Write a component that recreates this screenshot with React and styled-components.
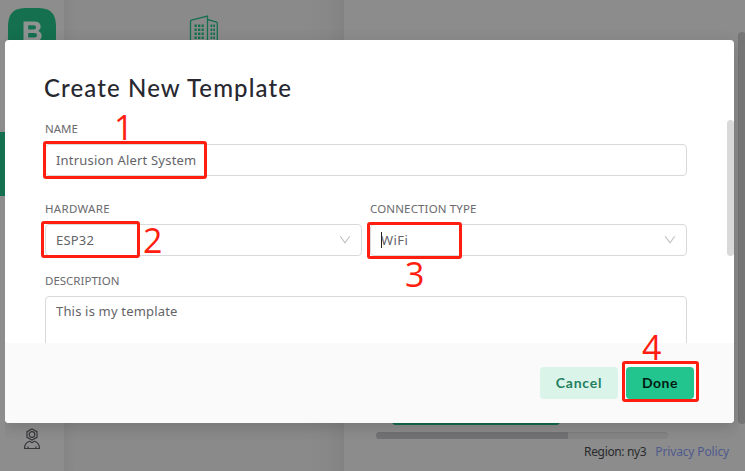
import React from "react";
import styled, { createGlobalStyle } from "styled-components";

const GlobalStyle = createGlobalStyle`
  * { box-sizing: border-box; }
  body {
    margin: 0;
    overflow: hidden;
    font-family: "Noto Sans", "Open Sans", sans-serif;
    background: #8c8c8c;
  }
`;

const Screen = styled.div`
  position: relative;
  width: 745px;
  height: 471px;
  overflow: hidden;
`;

const Page = styled.div`
  display: flex;
  height: 100%;
  background: #8c8c8c;
`;

const Rail = styled.nav`
  display: flex;
  flex-direction: column;
  align-items: center;
  width: 64px;
  padding-top: 8px;
  background: #8d8d8d;
`;

const Logo = styled.svg`
  display: block;
  width: 48px;
  height: 48px;
`;

const ActiveItem = styled.div`
  width: 64px;
  height: 64px;
  margin-top: 76px;
  background: #14704f;
`;

const ProfileIcon = styled.svg`
  width: 18px;
  height: 22px;
  margin-top: 232px;
`;

const Side = styled.aside`
  width: 280px;
  display: flex;
  justify-content: center;
  align-items: flex-start;
  padding-top: 15px;
  background: linear-gradient(90deg, #858585, #8a8a8a 4%, #8a8a8a 85%, #888888 94%, #828282);
`;

const Main = styled.main`
  flex: 1;
  display: flex;
  flex-direction: column;
  justify-content: flex-end;
`;

const PrimaryStrip = styled.div`
  width: 168px;
  height: 32px;
  margin-left: 48px;
  border-radius: 4px;
  background: #126b4b;
`;

const Track = styled.div`
  width: 292px;
  height: 7px;
  margin: 7px 0 0 32px;
  border-radius: 4px;
  background: #858585;
  border-top: 1px solid #7e7e7e;
`;

const Thumb = styled.div`
  width: 192px;
  height: 7px;
  margin-top: -1px;
  border-radius: 4px 0 0 4px;
  background: #727274;
`;

const Footer = styled.footer`
  display: flex;
  justify-content: flex-end;
  gap: 9px;
  height: 32px;
  padding: 4px 16px 0 0;
  font-size: 12px;
  line-height: 18px;
  color: #292a2d;
`;

const FooterText = styled.span`
  letter-spacing: ${(p) => p.$spacing || 0}px;
`;

const Policy = styled(FooterText)`
  color: #4f5b8c;
`;

const PageScroll = styled.div`
  position: absolute;
  left: 738px;
  top: 32px;
  width: 8px;
  height: 392px;
  border-radius: 4px;
  background: #757575;
`;

const ModalWrap = styled.div`
  position: absolute;
  top: 0;
  left: 5px;
  width: 734px;
  height: 439px;
  padding: 40px 5px 16px 0;
  overflow: hidden;
`;

const Modal = styled.section`
  position: relative;
  display: flex;
  flex-direction: column;
  height: 383px;
  overflow: hidden;
  border-radius: 4px;
  background: #fff;
`;

const ModalShadow = styled.div`
  border-radius: 4px;
  box-shadow: 0 4px 16px rgba(0, 0, 0, 0.16);
`;

const Form = styled.div`
  height: 303px;
  padding: 32px 47px 0 40px;
  overflow: hidden;
`;

const Title = styled.h1`
  margin: 0 0 0 -1px;
  height: 32px;
  font: 500 24px/32px Lato, sans-serif;
  letter-spacing: 1.12px;
  color: #282830;
  white-space: nowrap;
`;

const Columns = styled.div`
  display: grid;
  grid-template-columns: 317px 317px;
  gap: 8px;
`;

const Field = styled.div`
  display: flex;
  flex-direction: column;
  padding-top: ${(p) => p.$top}px;
`;

const Label = styled.label`
  height: 16px;
  margin-bottom: 7px;
  font-size: 11.5px;
  line-height: 16px;
  letter-spacing: ${(p) => p.$spacing || 0}px;
  color: #6a6a6e;
  white-space: nowrap;
`;

const Control = styled.div`
  display: flex;
  justify-content: space-between;
  align-items: flex-start;
  height: ${(p) => p.$height || 32}px;
  padding: ${(p) => p.$pad || 4}px 10px ${(p) => p.$pad || 4}px 11px;
  border: 1px solid #d9d9d9;
  border-radius: 4px;
  font-size: 13px;
  line-height: 22px;
  color: #646468;
`;

const Value = styled.span`
  margin-left: -1px;
  letter-spacing: ${(p) => p.$spacing || 0}px;
`;

const Caret = styled.i`
  position: absolute;
  width: 1px;
  height: 16px;
  margin-top: 3px;
  background: #222;
`;

const Chevron = styled.svg`
  width: 12px;
  height: 10px;
  margin-top: 6px;
`;

const Actions = styled.div`
  display: flex;
  justify-content: flex-end;
  gap: 8px;
  height: 80px;
  padding: 24px 40px;
  background: #fafafa;
`;

const Button = styled.button`
  width: ${(p) => (p.$primary ? 68 : 78)}px;
  height: 32px;
  padding: 0;
  border: 0;
  border-radius: 4px;
  background: ${(p) => (p.$primary ? "#23c58e" : "#daf4ea")};
  color: ${(p) => (p.$primary ? "#041a12" : "#247f60")};
  font: 700 14px/32px Lato, sans-serif;
  letter-spacing: ${(p) => (p.$primary ? 0.5 : 0.75)}px;
`;

const FormScroll = styled.div`
  position: absolute;
  right: 0;
  top: 80px;
  width: 7px;
  height: 136px;
  border-radius: 4px;
  background: #d9d9d9;
`;

const Mark = styled.div`
  position: absolute;
  left: ${(p) => p.$x}px;
  top: ${(p) => p.$y}px;
  width: ${(p) => p.$w}px;
  height: ${(p) => p.$h}px;
  border: 3px solid #ff1e10;
  border-radius: 3px;
`;

const Step = styled.span`
  position: absolute;
  left: ${(p) => p.$x}px;
  top: ${(p) => p.$y}px;
  font: 400 34px/34px "Open Sans", sans-serif;
  color: #ff1e10;
`;

const Arrow = () => (
  <Chevron viewBox="0 0 12 10" fill="none" stroke="#bfbfbf" strokeWidth="1.1">
    <path d="M1.2 1.2 6 7.8 10.8 1.2" />
  </Chevron>
);

function Building() {
  return (
    <svg width="30" height="34" viewBox="0 0 30 34" fill="none" stroke="#14704f" strokeWidth="1.3">
      <path d="M1.5 33V6.5Q1.5 5.4 2.4 5.1L18.5 1V33M18.5 4.5 27.5 7Q28.3 7.3 28.3 8.2V33" />
      <path d="M5.5 10.8H15M5.5 14.8H15M5.5 18.8H15M5.5 22.8H15M5.5 26.8H15" strokeWidth="2.5" strokeDasharray="2.3 1.2" />
      <path d="M21.5 10.8H26M21.5 14.8H26M21.5 18.8H26M21.5 22.8H26M21.5 26.8H26" strokeWidth="2.5" strokeDasharray="1.8 1" />
    </svg>
  );
}

export default function App() {
  return (
    <Screen>
      <GlobalStyle />
      <Page>
        <Rail>
          <Logo viewBox="0 0 48 48">
            <path d="M0 20C0 5 5 0 20 0H28C43 0 48 5 48 20V28C48 43 43 48 28 48H20C5 48 0 43 0 28Z" fill="#14704f" />
            <path
              fillRule="evenodd"
              fill="#8f9391"
              d="M15.5 13.5H26Q32.7 13.5 32.7 18.8 32.7 21.8 30.2 23.1 33.7 24.4 33.7 28 33.7 33.2 26.5 33.2H15.5ZM20.2 17.2V21.5H25.3Q28 21.5 28 19.3 28 17.2 25.3 17.2ZM20.2 25.1V29.5H26Q29 29.5 29 27.3 29 25.1 26 25.1Z"
            />
          </Logo>
          <ActiveItem />
          <ProfileIcon viewBox="0 0 18 22" fill="none" stroke="#37373b" strokeWidth="1.2">
            <path d="M9 1 14 3.6V9.4L9 12 4 9.4V3.6ZM1.5 20.5C1.5 16.5 3 14.6 6.3 13.3L9 14.6 11.7 13.3C15 14.6 16.5 16.5 16.5 20.5ZM5 18.5V20.5M13 18.5V20.5" />
            <circle cx="9" cy="6.5" r="2.8" />
          </ProfileIcon>
        </Rail>
        <Side>
          <Building />
        </Side>
        <Main>
          <PrimaryStrip />
          <Track>
            <Thumb />
          </Track>
          <Footer>
            <FooterText $spacing={-0.35}>Region: ny3</FooterText>
            <Policy $spacing={-0.15}>Privacy Policy</Policy>
          </Footer>
        </Main>
      </Page>
      <PageScroll />
      <ModalWrap>
        <ModalShadow>
          <Modal>
            <Form>
              <Title>Create New Template</Title>
              <Field $top={17}>
                <Label>NAME</Label>
                <Control>
                  <Value $spacing={0.2}>Intrusion Alert System</Value>
                </Control>
              </Field>
              <Columns>
                <Field $top={25}>
                  <Label $spacing={0.3}>HARDWARE</Label>
                  <Control>
                    <Value $spacing={0.2}>ESP32</Value>
                    <Arrow />
                  </Control>
                </Field>
                <Field $top={25}>
                  <Label $spacing={0.15}>CONNECTION TYPE</Label>
                  <Control>
                    <Value $spacing={0.4}>
                      <Caret />
                      WiFi
                    </Value>
                    <Arrow />
                  </Control>
                </Field>
              </Columns>
              <Field $top={17}>
                <Label>DESCRIPTION</Label>
                <Control $height={80} $pad={3}>
                  <Value $spacing={0.18}>This is my template</Value>
                </Control>
              </Field>
            </Form>
            <Actions>
              <Button>Cancel</Button>
              <Button $primary>Done</Button>
            </Actions>
            <FormScroll />
          </Modal>
        </ModalShadow>
      </ModalWrap>
      <Mark $x={43} $y={141} $w={164} $h={38} />
      <Mark $x={41} $y={221} $w={99} $h={37} />
      <Mark $x={367} $y={222} $w={95} $h={37} />
      <Mark $x={622} $y={361} $w={77} $h={41} />
      <Step $x={114} $y={110}>1</Step>
      <Step $x={143} $y={223}>2</Step>
      <Step $x={405} $y={257}>3</Step>
      <Step $x={642} $y={330}>4</Step>
    </Screen>
  );
}
